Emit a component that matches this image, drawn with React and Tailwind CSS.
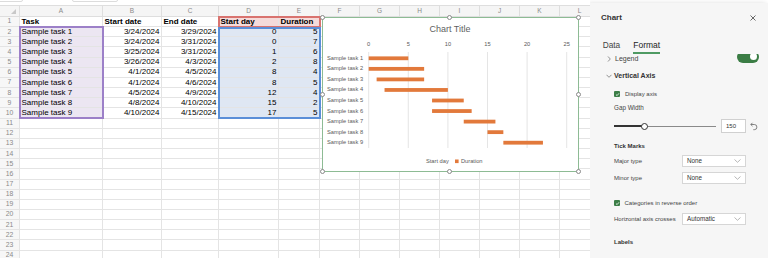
import React from "react";

const cols = [
    { key: "A", w: "w-[83px]" },
    { key: "B", w: "w-[59px]" },
    { key: "C", w: "w-[57px]" },
    { key: "D", w: "w-[60px]" },
    { key: "E", w: "w-[41px]" },
    { key: "F", w: "w-[40px]" },
    { key: "G", w: "w-[40px]" },
    { key: "H", w: "w-[40px]" },
    { key: "I", w: "w-[40px]" },
    { key: "J", w: "w-[40px]" },
    { key: "K", w: "w-[40px]" },
    { key: "L", w: "w-[40px]" },
];

const header = ["Task", "Start date", "End date", "Start day", "Duration"];

const tasks = [
    ["Sample task 1", "3/24/2024", "3/29/2024", 0, 5],
    ["Sample task 2", "3/24/2024", "3/31/2024", 0, 7],
    ["Sample task 3", "3/25/2024", "3/31/2024", 1, 6],
    ["Sample task 4", "3/26/2024", "4/3/2024", 2, 8],
    ["Sample task 5", "4/1/2024", "4/5/2024", 8, 4],
    ["Sample task 6", "4/1/2024", "4/6/2024", 8, 5],
    ["Sample task 7", "4/5/2024", "4/9/2024", 12, 4],
    ["Sample task 8", "4/8/2024", "4/10/2024", 15, 2],
    ["Sample task 9", "4/10/2024", "4/15/2024", 17, 5],
];

const rowNums = Array.from({ length: 24 }, (_, i) => i + 1);

const cellFill = (r, c) => {
    if (r === 1 && (c === 3 || c === 4)) return "bg-[#f5dbda]";
    if (r >= 2 && r <= 10 && c === 0) return "bg-[#ece6f2]";
    if (r >= 2 && r <= 10 && (c === 3 || c === 4)) return "bg-[#dfe7f3]";
    return "bg-white";
};

const cellValue = (r, c) => {
    if (r === 1) return header[c] ?? "";
    if (r >= 2 && r <= 10) return tasks[r - 2][c] ?? "";
    return "";
};

const Handle = ({ className }) => (
    <div className={`absolute w-[5px] h-[5px] rounded-full bg-white border border-[#8a8a8a] ${className}`} />
);

const GanttChart = () => {
    const x0 = 45.7;
    const unit = 7.92;
    const rowY = (i) => 40.3 + i * 10.55;
    return (
        <svg width="255" height="153" viewBox="0 0 255 153" className="block">
            <text x="127" y="12" fontSize="9" fill="#5f5f5f" textAnchor="middle" dominantBaseline="middle" fontFamily="'Liberation Sans', sans-serif">
                Chart Title
            </text>
            {[0, 5, 10, 15, 20, 25].map((v) => (
                <g key={v}>
                    <text x={x0 + v * unit} y="26" fontSize="5.7" fill="#595959" textAnchor="middle" dominantBaseline="middle" fontFamily="'Liberation Sans', sans-serif">
                        {v}
                    </text>
                    <line x1={x0 + v * unit} x2={x0 + v * unit} y1="34" y2="130" stroke="#dedede" strokeWidth="0.8" />
                </g>
            ))}
            {tasks.map((t, i) => (
                <g key={t[0]}>
                    <text x="4" y={rowY(i)} fontSize="5.7" fill="#595959" dominantBaseline="middle" fontFamily="'Liberation Sans', sans-serif">
                        {t[0]}
                    </text>
                    <rect x={x0 + t[3] * unit} y={rowY(i) - 1.9} width={t[4] * unit} height="3.8" fill="#e2793b" />
                </g>
            ))}
            <text x="103" y="143.3" fontSize="5.7" fill="#595959" dominantBaseline="middle" fontFamily="'Liberation Sans', sans-serif">
                Start day
            </text>
            <rect x="132" y="141.5" width="3.6" height="3.6" fill="#e2793b" />
            <text x="138" y="143.3" fontSize="5.7" fill="#595959" dominantBaseline="middle" fontFamily="'Liberation Sans', sans-serif">
                Duration
            </text>
        </svg>
    );
};

const Chevron = () => (
    <svg width="6" height="4" viewBox="0 0 6 4" className="shrink-0">
        <path d="M0.5 0.8 L3 3.3 L5.5 0.8" stroke="#777" strokeWidth="0.8" fill="none" />
    </svg>
);

const Checkbox = () => (
    <div className="w-[6px] h-[6px] rounded-[1px] bg-[#3c7e47] flex items-center justify-center shrink-0">
        <svg width="5" height="5" viewBox="0 0 5 5">
            <path d="M1 2.6 L2.1 3.6 L4 1.3" stroke="white" strokeWidth="0.8" fill="none" />
        </svg>
    </div>
);

const Dropdown = ({ value }) => (
    <div className="w-[64px] shrink-0 h-[12px] bg-white border border-[#d6d6d6] flex items-center justify-between pl-[4px] pr-[4px] text-[6.3px] text-[#333]">
        <span>{value}</span>
        <svg width="7" height="4" viewBox="0 0 7 4">
            <path d="M0.5 0.5 L3.5 3.3 L6.5 0.5" stroke="#9a9a9a" strokeWidth="0.7" fill="none" />
        </svg>
    </div>
);

const ChartPanel = () => {
    return (
        <div className="h-full bg-[#f6f6f6] shadow-[-2px_0_5px_rgba(0,0,0,0.13)] flex flex-col font-['Liberation_Sans',sans-serif] text-[#262626]">
            <div className="h-[30px] shrink-0 flex items-center justify-between pl-[11px] pr-[12px]">
                <span className="text-[8px] font-bold text-[#333]">Chart</span>
                <svg width="6" height="6" viewBox="0 0 6 6">
                    <path d="M0.5 0.5 L5.5 5.5 M5.5 0.5 L0.5 5.5" stroke="#444" strokeWidth="0.8" />
                </svg>
            </div>
            <div className="h-[21px] shrink-0 flex items-end pl-[12.7px] gap-[13px]">
                <div className="flex flex-col">
                    <span className="h-[10px] leading-[10px] text-[8.3px] text-[#444]">Data</span>
                    <div className="mt-[2px] h-[2px]" />
                </div>
                <div className="flex flex-col">
                    <span className="h-[10px] leading-[10px] text-[8.5px] text-[#222]">Format</span>
                    <div className="mt-[2px] h-[2px] bg-[#4f9a63]" />
                </div>
            </div>
            <div className="flex-1 overflow-hidden">
                <div className="-mt-[2px] flex flex-col pl-[16px] pr-[9px]">
                    {/* Legend (scrolled partly out of view) */}
                    <div className="h-[14px] flex items-center">
                        <svg width="4" height="6" viewBox="0 0 4 6" className="ml-[1px]">
                            <path d="M1 0.5 L3.3 3 L1 5.5" stroke="#777" strokeWidth="0.8" fill="none" />
                        </svg>
                        <span className="ml-[4px] text-[7px] text-[#444]">Legend</span>
                        <div className="ml-auto -mt-[5px] w-[22px] h-[12px] rounded-full bg-[#3b7d45] relative">
                            <div className="absolute right-[2.5px] top-[2.5px] w-[7px] h-[7px] rounded-full bg-white" />
                        </div>
                    </div>
                    {/* Vertical axis */}
                    <div className="h-[20px] flex items-center">
                        <Chevron />
                        <span className="ml-[2px] text-[7px] font-bold text-[#333]">Vertical Axis</span>
                    </div>
                    <div className="pl-[8px] pr-[13px] flex flex-col text-[6px] text-[#444]">
                        <div className="h-[16px] flex items-center gap-[5px]">
                            <Checkbox />
                            <span>Display axis</span>
                        </div>
                        <div className="h-[12px] flex items-center">
                            <span className="text-[6.3px]">Gap Width</span>
                        </div>
                        <div className="h-[24px] flex items-center -mr-[12px]">
                            <div className="w-[102px] shrink-0 h-[8px] relative flex items-center">
                                <div className="w-[30px] h-[1.5px] bg-[#333]" />
                                <div className="flex-1 h-[1px] bg-[#8a8a8a]" />
                                <div className="absolute left-[26.5px] top-[0.5px] w-[7px] h-[7px] rounded-full bg-white border border-[#333]" />
                            </div>
                            <div className="ml-[5px] shrink-0 w-[25px] h-[14px] bg-white border border-[#d0d0d0] flex items-center pl-[4px] text-[6px] text-[#333]">
                                150
                            </div>
                            <svg width="8" height="9" viewBox="0 0 8 9" className="ml-[4px] shrink-0">
                                <path d="M2.5 0.8 L0.8 2.5 L2.5 4.2 M0.8 2.5 H4.3 A2.6 2.6 0 0 1 4.3 7.7 H3.3" stroke="#666" strokeWidth="0.8" fill="none" />
                            </svg>
                        </div>
                        <div className="h-[16px] flex items-center">
                            <span className="font-bold text-[#333]">Tick Marks</span>
                        </div>
                        <div className="h-[14px] flex items-center">
                            <span className="w-[68px] shrink-0">Major type</span>
                            <Dropdown value="None" />
                        </div>
                        <div className="h-[20px] flex items-center">
                            <span className="w-[68px] shrink-0">Minor type</span>
                            <Dropdown value="None" />
                        </div>
                        <div className="mt-[8px] h-[14px] flex items-center gap-[4.5px]">
                            <Checkbox />
                            <span>Categories in reverse order</span>
                        </div>
                        <div className="h-[18px] flex items-center">
                            <span className="w-[68px] shrink-0 whitespace-nowrap">Horizontal axis crosses</span>
                            <Dropdown value="Automatic" />
                        </div>
                        <div className="mt-[6px] h-[16px] flex items-center">
                            <span className="font-bold text-[#333]">Labels</span>
                        </div>
                    </div>
                </div>
            </div>
        </div>
    );
};

const Sheet = () => {
    return (
        <div className="relative w-[590px] shrink-0 h-full overflow-hidden bg-white font-['Liberation_Sans',sans-serif]">
            <div className="w-[600px]">
                {/* top strip */}
                <div className="h-[5px] relative">
                    <div className="absolute left-[-4px] top-[-6px] w-[27px] h-[8px] rounded-[2px] border border-[#dcdcdc]" />
                    <div className="absolute left-[72px] top-[-6px] w-[46px] h-[8px] rounded-[2px] border border-[#dcdcdc]" />
                </div>
                {/* column letters */}
                <div className="flex h-[12px] bg-[#f5f5f5] border-t border-b border-[#dedede]">
                    <div className="w-[20px] shrink-0 border-r border-[#dedede] relative">
                        <svg width="5" height="5" viewBox="0 0 5 5" className="absolute right-[3px] bottom-[2px]">
                            <path d="M5 0 L5 5 L0 5 Z" fill="#c8c8c8" />
                        </svg>
                    </div>
                    {cols.map((c) => (
                        <div key={c.key} className={`${c.w} shrink-0 border-r border-[#dedede] flex items-center justify-center text-[6.5px] text-[#8a8a8a]`}>
                            {c.key}
                        </div>
                    ))}
                </div>
                {/* rows */}
                {rowNums.map((r) => (
                    <div key={r} className="flex h-[10.17px]">
                        <div className="w-[20px] shrink-0 bg-[#f7f7f7] border-r border-b border-[#e4e4e4] flex items-center justify-center text-[6.8px] text-[#8a8a8a]">
                            {r}
                        </div>
                        {cols.map((c, ci) => {
                            const val = cellValue(r, ci);
                            const right = r >= 2 && ci >= 1 && ci <= 4;
                            return (
                                <div
                                    key={c.key}
                                    className={`${c.w} ${cellFill(r, ci)} shrink-0 border-r border-b border-[#e4e4e4] flex items-center px-[1.5px] overflow-hidden whitespace-nowrap text-[8px] text-black ${right ? "justify-end" : "justify-start"} ${r === 1 ? "font-bold" : ""}`}
                                >
                                    {val}
                                </div>
                            );
                        })}
                    </div>
                ))}
            </div>

            {/* selection ranges */}
            <div className="absolute left-[19px] top-[26px] w-[85px] h-[93px] border-2 border-[#9c80c8]" />
            <div className="absolute left-[218px] top-[16px] w-[103px] h-[11.5px] border-2 border-[#d9736f]" />
            <div className="absolute left-[218px] top-[27px] w-[103px] h-[92px] border-2 border-[#5b8fd8]" />

            {/* chart object */}
            <div className="absolute left-[322px] top-[17px] w-[257px] h-[155px] border border-[#8dbb94] bg-white">
                <GanttChart />
                <Handle className="-left-[3px] -top-[3px]" />
                <Handle className="left-[124px] -top-[3px]" />
                <Handle className="-right-[3px] -top-[3px]" />
                <Handle className="-left-[3px] top-[74px]" />
                <Handle className="-right-[3px] top-[74px]" />
                <Handle className="-left-[3px] -bottom-[3px]" />
                <Handle className="left-[124px] -bottom-[3px]" />
                <Handle className="-right-[3px] -bottom-[3px]" />
            </div>
        </div>
    );
};

const App = () => {
    return (
        <div className="w-[768px] h-[258px] overflow-hidden flex bg-white">
            <Sheet />
            <div className="w-[178px] shrink-0 pt-[3px] overflow-hidden">
                <ChartPanel />
            </div>
        </div>
    );
};

export default App;
